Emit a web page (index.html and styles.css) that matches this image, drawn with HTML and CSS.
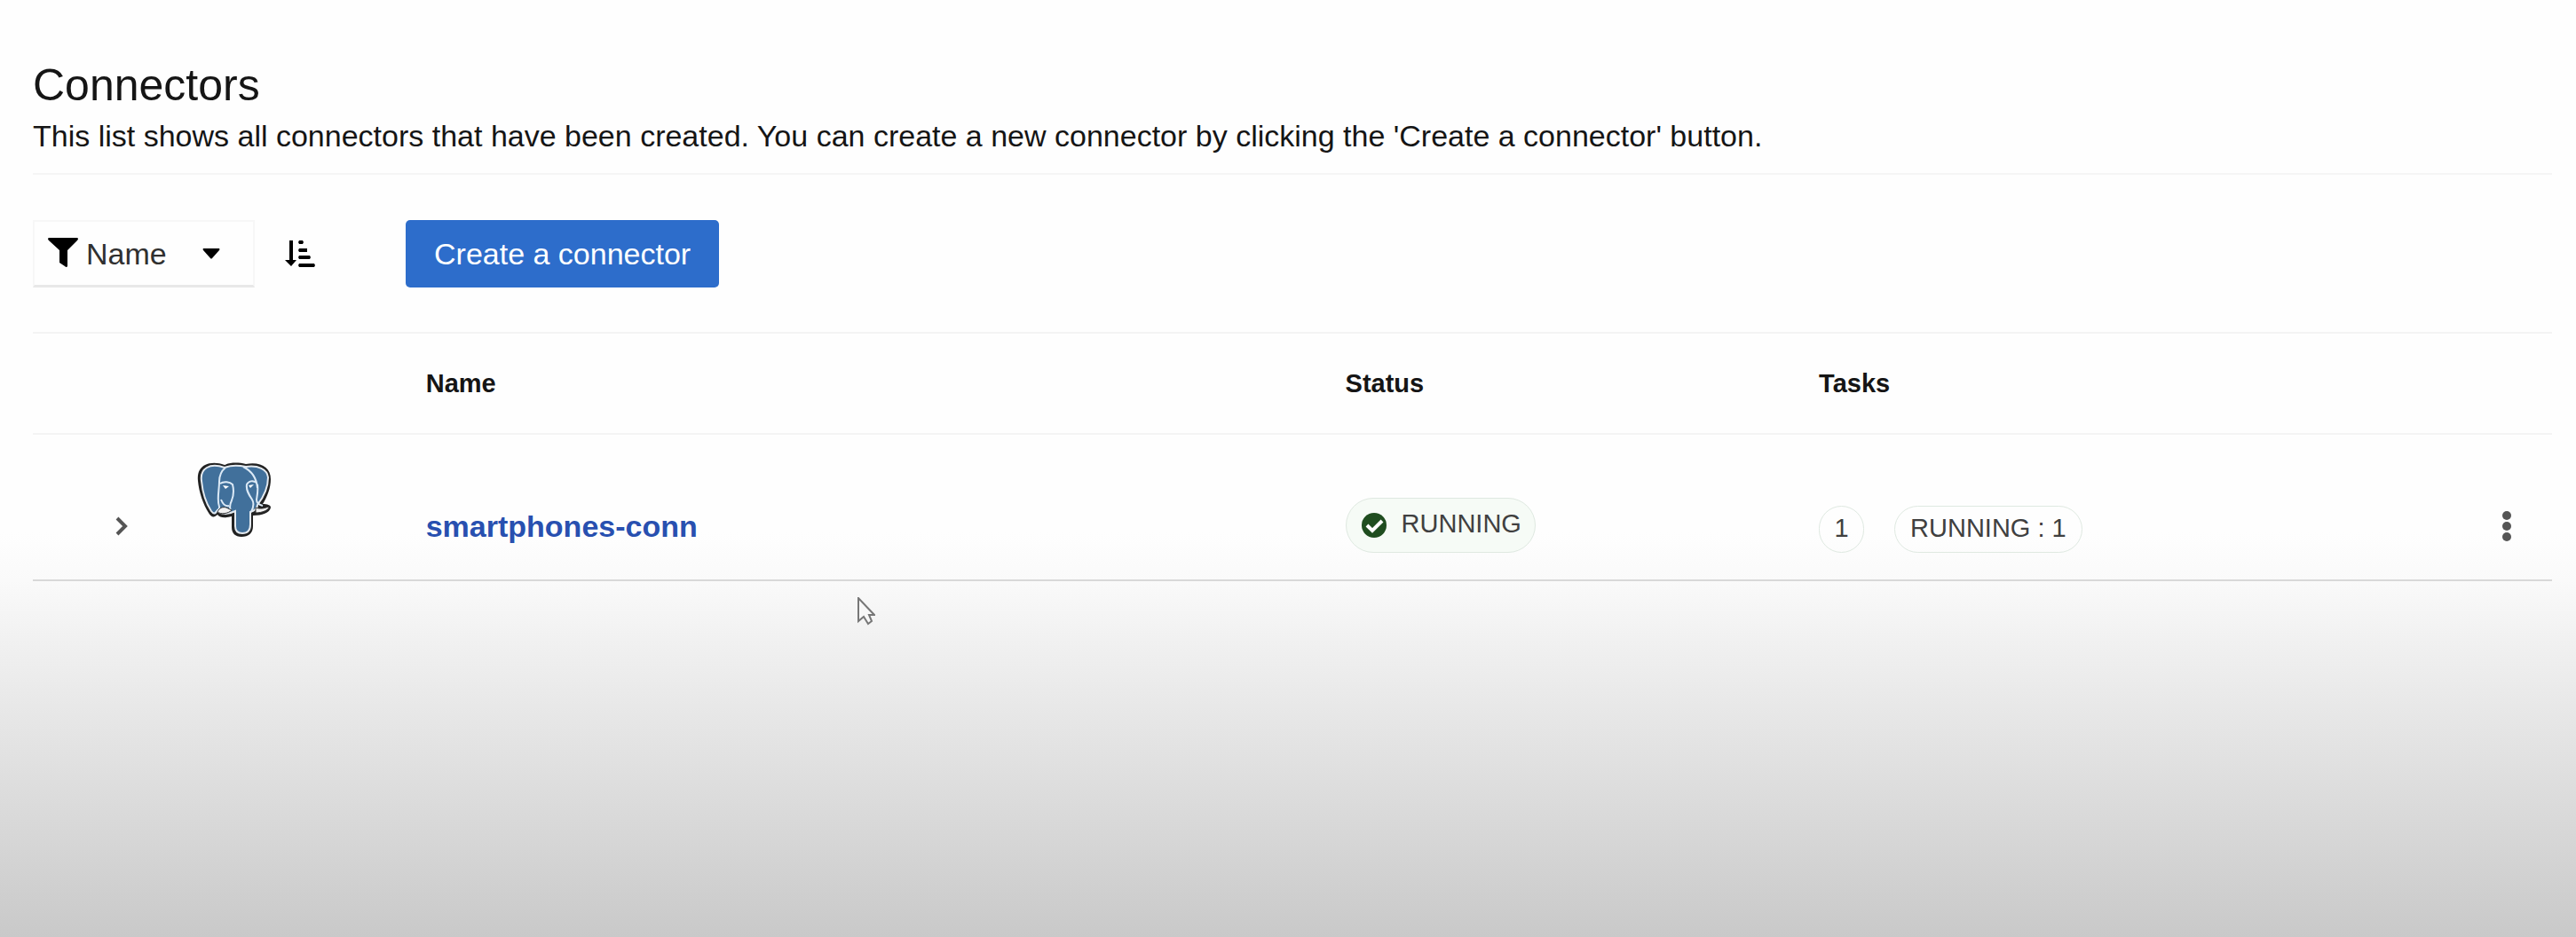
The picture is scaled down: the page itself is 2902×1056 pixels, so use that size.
FILE: index.html
```html
<!DOCTYPE html>
<html lang="en">
<head>
<meta charset="utf-8">
<title>Connectors</title>
<link rel="stylesheet" href="styles.css">
</head>
<body>
<main class="page">
  <header class="page-header">
    <h1 class="title">Connectors</h1>
    <p class="description">This list shows all connectors that have been created. You can create a new connector by clicking the 'Create a connector' button.</p>
  </header>

  <div class="toolbar">
    <div class="sort-field">
      <svg class="filter-icon" viewBox="0 0 34 33" aria-hidden="true"><path d="M1 0h32q2 1 0 3L22 14v18q-1 2-3 0l-6-4V14L1 3q-2-2 0-3z"/></svg>
      <select class="sort-select" aria-label="Sort by">
        <option>Name</option>
        <option>Status</option>
        <option>Tasks</option>
      </select>
      <svg class="caret-icon" viewBox="0 0 20 12" aria-hidden="true"><path d="M1 0h18q1 1 0 2l-8 9q-1 1-2 0L1 2q-1-1 0-2z"/></svg>
    </div>
    <button class="sort-button" type="button" aria-label="Sort ascending">
      <svg class="sort-icon" viewBox="0 0 34 32" aria-hidden="true"><path d="M5 1h4v22h4L7 30 0 23h5zM16 1h4l1 2-1 2h-4l-1-2zM16 10h9v4h-9l-1-2zM16 18h12l1 2-1 2H16l-1-2zM16 27h17l1 2-1 2H16l-1-2z"/></svg>
    </button>
    <button class="create-button" type="button">Create a connector</button>
  </div>

  <table class="connectors">
    <colgroup>
      <col class="col-toggle"><col class="col-logo"><col class="col-name"><col class="col-status"><col class="col-tasks"><col class="col-actions">
    </colgroup>
    <thead>
      <tr><td></td><td></td><th scope="col">Name</th><th scope="col">Status</th><th scope="col">Tasks</th><td></td></tr>
    </thead>
    <tbody>
      <tr>
        <td class="toggle-cell">
          <button class="icon-button" type="button" aria-label="Show details">
            <svg class="chevron-icon" viewBox="0 0 14 22" aria-hidden="true"><path d="M2 2l9 9-9 9"/></svg>
          </button>
        </td>
        <td class="logo-cell">
          <svg class="logo" viewBox="0 0 84 84" role="img" aria-label="PostgreSQL">
            <path class="logo-edge" d="M31 3C23 0 15 0 9 3 3 6 0 12 1 21c1 12 6 27 12 36 3 5 6 6 10 2 3 4 9 4 16 2v12c0 7 4 11 11 11 8 0 13-4 13-12V60c10 0 19-3 20-9 0-3-4-4-9-4 5-8 9-18 9-28C83 6 72-1 55 2 46 0 38 0 31 3z"/>
            <path class="logo-fill" d="M31 6C23 3 16 3 11 6 6 9 4 14 5 21c1 11 5 25 11 34 3 4 4 3 7-1 3 5 12 5 20 1v17c0 5 3 8 8 8 6 0 9-4 9-10V56c7-2 8-5 8-8 7-9 12-20 12-31C79 8 69 3 55 5 46 3 38 3 31 6z"/>
            <path class="logo-line" d="M32 6c-5 4-7 8-7 16 0 10-3 20 0 28 1 4-3 4-5 8M26 24c4-3 11-2 14 1 2 8 1 13-1 18-2 4-3 7-1 12M27 42c2 5 5 8 9 7M52 5c10 5 15 12 16 24M67 23c-4-3-9-2-11 2-1 6 2 11 6 17 3 5 1 10-1 14M68 25c1 7 0 11-1 17 0 4 3 6 7 7"/>
            <path class="logo-tusk" d="M23 56c2-5 6-6 10-5l6 3c-4 4-12 5-16 2zM66 51c5 2 9 1 15-1 0 4-8 7-15 7z"/>
            <path class="logo-eye" d="M29 26l7 1-4 3zM58 26l6-1-4 4z"/>
          </svg>
        </td>
        <td class="name-cell"><a class="name-link" href="#smartphones-conn">smartphones-conn</a></td>
        <td class="badge-cell">
          <span class="badge status-badge">
            <svg class="check-icon" viewBox="0 0 28 28" aria-hidden="true"><circle cx="14" cy="14" r="14"/><path d="M6 14l6 6L23 9"/></svg>
            <span>RUNNING</span>
          </span>
        </td>
        <td class="badge-cell">
          <div class="tasks">
            <span class="badge count-badge">1</span>
            <span class="badge task-badge">RUNNING : 1</span>
          </div>
        </td>
        <td class="action-cell">
          <button class="icon-button" type="button" aria-label="Actions">
            <svg class="kebab-icon" viewBox="0 0 10 34" aria-hidden="true"><circle cx="5" cy="5" r="5"/><circle cx="5" cy="17" r="5"/><circle cx="5" cy="29" r="5"/></svg>
          </button>
        </td>
      </tr>
    </tbody>
  </table>
  <svg class="pointer" viewBox="0 0 20 32" aria-hidden="true"><path d="M1 1v26l6-5 5 8 4-3-3-7h6z"/></svg>
</main>
</body>
</html>
```
FILE: styles.css
```css
* {
  box-sizing: border-box;
}

body {
  margin: 0;
  min-height: 100vh;
  background: linear-gradient(#fefefe 0, #fefefe 600px, #fafafa 654px, #f0f0f0 728px, #e1e1e1 856px, #c9c9c9 1056px);
  color: #151515;
  font-family: "Liberation Sans", Arial, sans-serif;
}

button,
select {
  margin: 0;
  padding: 0;
  border: 0;
  background: none;
  color: inherit;
  font: inherit;
}

svg {
  display: block;
}

.page {
  position: relative;
  padding: 66px 27px 0 37px;
}

.page-header {
  padding-bottom: 22px;
  border-bottom: 2px solid #f5f5f5;
}

.title {
  margin: 0;
  font-size: 50px;
  font-weight: 400;
  line-height: 60px;
}

.description {
  margin: 7px 0 0;
  font-size: 34px;
  line-height: 40px;
}

.toolbar {
  display: flex;
  align-items: center;
  padding: 51px 0 50px;
}

.sort-field {
  position: relative;
  width: 250px;
  height: 76px;
  border: 2px solid #f7f7f7;
  border-bottom: 3px solid #e8e8e8;
}

.sort-select {
  width: 100%;
  height: 100%;
  padding-left: 58px;
  appearance: none;
  color: #303030;
  font-size: 34px;
}

.filter-icon {
  position: absolute;
  top: 18px;
  left: 15px;
  width: 34px;
  height: 33px;
  pointer-events: none;
}

.caret-icon {
  position: absolute;
  top: 30px;
  right: 37px;
  width: 20px;
  height: 12px;
  pointer-events: none;
}

.sort-button {
  margin-left: 34px;
}

.sort-icon {
  width: 34px;
  height: 32px;
}

.create-button {
  margin-left: 102px;
  padding: 0 32px;
  height: 76px;
  border-radius: 5px;
  background: #2d6dcb;
  color: #fff;
  font-size: 34px;
}

.connectors {
  width: 100%;
  table-layout: fixed;
  border-collapse: separate;
  border-spacing: 0;
  border-top: 2px solid #f4f4f4;
}

.col-toggle {
  width: 6%;
}

.col-logo {
  width: 9.6%;
}

.col-name {
  width: 36.5%;
}

.col-status {
  width: 18.8%;
}

.col-actions {
  width: 56px;
}

.connectors th,
.connectors td {
  padding: 0;
  text-align: left;
}

.connectors th {
  height: 114px;
  font-size: 29px;
}

.connectors thead th,
.connectors thead td {
  border-bottom: 2px solid #f4f4f4;
}

.connectors tbody td {
  height: 165px;
  border-bottom: 2px solid #d8d8d8;
  vertical-align: bottom;
}

.connectors .toggle-cell {
  padding: 0 0 49px 93px;
}

.connectors .logo-cell {
  padding: 0 0 48px 15px;
}

.connectors .name-cell {
  padding-bottom: 41px;
}

.connectors .badge-cell {
  padding-bottom: 30px;
}

.connectors .action-cell {
  padding-bottom: 43px;
}

.icon-button {
  display: block;
}

.chevron-icon {
  width: 14px;
  height: 22px;
  fill: none;
  stroke: #555;
  stroke-width: 4;
}

.kebab-icon {
  width: 10px;
  height: 34px;
  fill: #555;
}

.logo {
  width: 84px;
  height: 84px;
}

.logo-edge {
  fill: #222;
}

.logo-fill {
  fill: #41709b;
  stroke: #e4eaf0;
  stroke-width: 2;
}

.logo-line {
  fill: none;
  stroke: #dbe9f6;
  stroke-width: 2;
}

.logo-tusk {
  fill: #f2f2f2;
  stroke: #333;
  stroke-width: 1;
}

.logo-eye {
  fill: #fff;
}

.name-link {
  color: #2850b0;
  font-size: 34px;
  font-weight: 700;
  line-height: 38px;
  text-decoration: none;
}

.badge {
  display: flex;
  align-items: center;
  height: 53px;
  padding: 0 17px 4px;
  border: 1px solid #dfe9e1;
  border-radius: 31px;
  color: #404040;
  font-size: 29px;
  line-height: 34px;
}

.status-badge {
  width: max-content;
  height: 62px;
  gap: 17px;
  padding: 0 15px 4px 17px;
  background: #f6fbf6;
}

.check-icon {
  width: 28px;
  height: 28px;
  margin-top: 4px;
  fill: #1f4d1f;
}

.check-icon path {
  fill: none;
  stroke: #fff;
  stroke-width: 4;
}

.tasks {
  display: flex;
  gap: 34px;
}

.count-badge {
  justify-content: center;
  width: 51px;
}

.pointer {
  position: absolute;
  top: 673px;
  left: 966px;
  width: 20px;
  height: 32px;
  fill: #f8f8f8;
  stroke: #777;
  stroke-width: 2;
}
```
